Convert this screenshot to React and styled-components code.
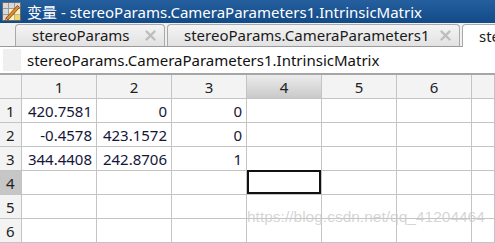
import React from "react";
import styled, { createGlobalStyle } from "styled-components";

const Global = createGlobalStyle`
  html, body { margin: 0; padding: 0; background: #fff; }
  body { width: 495px; height: 243px; overflow: hidden; font-family: "Noto Sans", "Noto Sans CJK SC", sans-serif; }
`;

const Window = styled.div`
  position: relative;
  width: 495px;
  height: 243px;
  overflow: hidden;
  display: flex;
  flex-direction: column;
  background: #fff;
`;

const TitleBar = styled.div`
  height: 25px;
  display: flex;
  align-items: center;
  gap: 6px;
  padding-left: 2px;
  background: linear-gradient(#255f9e, #134a88);
  color: #fff;
  font-size: 15px;
  white-space: nowrap;
`;

const TabStrip = styled.div`
  height: 27px;
  display: flex;
  align-items: flex-end;
  background: #f0f0f0;
  border-bottom: 1px solid #9a9a9a;
  padding-left: 2px;
  box-sizing: border-box;
`;

const Grip = styled.div`
  width: 3px;
  height: 18px;
  margin: 0 13px 4px 0;
  align-self: flex-end;
  background: repeating-linear-gradient(#9a9a9a 0 1px, transparent 1px 2px);
`;

const Tab = styled.div`
  width: ${(p) => (p.$w ? `${p.$w}px` : "auto")};
  height: 23px;
  box-sizing: border-box;
  display: flex;
  align-items: center;
  justify-content: space-between;
  padding: 0 8px 0 16px;
  margin-right: 2px;
  margin-bottom: -1px;
  border: 1px solid #a9a9a9;
  border-bottom: ${(p) => (p.$active ? "none" : "1px solid #9a9a9a")};
  border-radius: 4px 4px 0 0;
  background: ${(p) => (p.$active ? "#fff" : "linear-gradient(#f4f4f4, #e2e2e2)")};
  font-size: 15px;
  color: #1a1a1a;
  white-space: nowrap;
  flex-shrink: 0;
  overflow: hidden;
`;

const Close = styled.span`
  width: 11px;
  height: 11px;
  display: inline-flex;
`;

const PathBar = styled.div`
  height: 29px;
  display: flex;
  align-items: center;
  gap: 6px;
  padding-left: 3px;
  border-bottom: 2px solid #a6a6a6;
  font-size: 15px;
  color: #111;
  white-space: nowrap;
`;

const PathSwatch = styled.div`
  width: 18px;
  height: 22px;
  background: #efefef;
`;

const Grid = styled.div`
  display: grid;
  grid-template-columns: 22px repeat(6, 75px) 1fr;
  grid-auto-rows: 24px;
`;

const Cell = styled.div`
  box-sizing: border-box;
  border-right: 1px solid #c4c4c4;
  border-bottom: 1px solid #c4c4c4;
  display: flex;
  align-items: center;
  justify-content: flex-end;
  padding-right: 4px;
  font-size: 15px;
  color: #15153a;
  position: relative;
`;

const HeadCell = styled(Cell)`
  justify-content: center;
  padding: 0;
  color: #222;
  background: ${(p) => (p.$hl ? "linear-gradient(#ececec, #c9c9c9)" : "#f3f3f3")};
`;

const RowHead = styled(Cell)`
  justify-content: flex-start;
  padding: 0 0 0 6px;
  color: #222;
  background: ${(p) => (p.$hl ? "#c6c6c6" : "#f3f3f3")};
`;

const Selection = styled.div`
  position: absolute;
  left: 0;
  right: 0;
  bottom: 0;
  top: -1px;
  border: 2px solid #111;
`;

const Watermark = styled.div`
  position: absolute;
  left: 247px;
  top: 208px;
  font-family: "Liberation Sans", Arial, sans-serif;
  font-size: 15.5px;
  color: rgba(200, 200, 200, 0.75);
  pointer-events: none;
  white-space: nowrap;
`;

const AppIcon = () => (
  <svg width="19" height="19" viewBox="0 0 19 19">
    <rect x="0.5" y="0.5" width="18" height="18" fill="#f7f0c8" stroke="#6b6b6b" />
    <rect x="1" y="1" width="5" height="17" fill="#d9d9d9" />
    <rect x="1" y="1" width="17" height="5" fill="#d9d9d9" />
    <path d="M6.5 1v17M12.5 1v17M1 6.5h17M1 12.5h17" stroke="#9a9a9a" strokeWidth="1" />
    <rect x="12.5" y="12.5" width="5.5" height="5.5" fill="#f3d66a" />
    <path d="M4 16 L15.5 3.5 L17.5 5.5 L6 18 Z" fill="#e88c2a" stroke="#7a3d0a" strokeWidth="0.8" />
    <path d="M4 16 L6 18 L3 18.6 Z" fill="#f2d2a0" stroke="#7a3d0a" strokeWidth="0.6" />
  </svg>
);

const CloseIcon = () => (
  <Close>
    <svg width="11" height="11" viewBox="0 0 11 11">
      <path d="M1.5 1.5 L9.5 9.5 M9.5 1.5 L1.5 9.5" stroke="#bdbdbd" strokeWidth="2.4" strokeLinecap="round" />
    </svg>
  </Close>
);

const data = [
  ["420.7581", "0", "0"],
  ["-0.4578", "423.1572", "0"],
  ["344.4408", "242.8706", "1"],
  [],
  [],
  [],
];

export default function App() {
  return (
    <Window>
      <Global />
      <TitleBar>
        <AppIcon />
        <span>变量 - stereoParams.CameraParameters1.IntrinsicMatrix</span>
      </TitleBar>
      <TabStrip>
        <Grip />
        <Tab $w={150}>
          <span>stereoParams</span>
          <CloseIcon />
        </Tab>
        <Tab $w={293}>
          <span>stereoParams.CameraParameters1</span>
          <CloseIcon />
        </Tab>
        <Tab $active>
          <span>stereoParams.CameraParameters1.IntrinsicMatrix</span>
        </Tab>
      </TabStrip>
      <PathBar>
        <PathSwatch />
        <span>stereoParams.CameraParameters1.IntrinsicMatrix</span>
      </PathBar>
      <Grid>
        <HeadCell />
        {[1, 2, 3, 4, 5, 6].map((c) => (
          <HeadCell key={c} $hl={c === 4}>
            {c}
          </HeadCell>
        ))}
        <HeadCell />
        {data.map((row, r) => (
          <React.Fragment key={r}>
            <RowHead $hl={r === 3}>{r + 1}</RowHead>
            {[0, 1, 2, 3, 4, 5, 6].map((c) => (
              <Cell key={c}>
                {row[c] || ""}
                {r === 3 && c === 3 ? <Selection /> : null}
              </Cell>
            ))}
          </React.Fragment>
        ))}
      </Grid>
      <Watermark>https://blog.csdn.net/qq_41204464</Watermark>
    </Window>
  );
}
